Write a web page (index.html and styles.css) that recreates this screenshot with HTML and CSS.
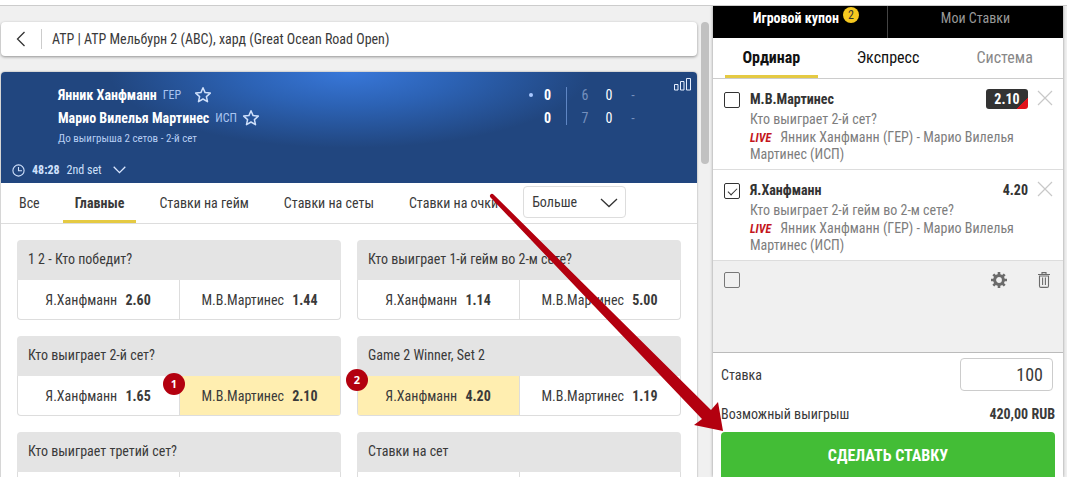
FILE: index.html
```html
<!DOCTYPE html>
<html lang="ru">
<head>
    <meta charset="UTF-8">
    <meta name="viewport" content="width=device-width, initial-scale=1.0">
    <title>Янник Ханфманн - Марио Вилелья Мартинес</title>
    <link rel="stylesheet" href="styles.css">
</head>
<body>
    <div class="topbar"></div>
    <div class="app">
        <main class="event">
            <div class="breadcrumb">
                <a href="#" class="back" aria-label="Назад">
                    <svg width="10" height="16" viewBox="0 0 10 16"><path d="M8.500 1 1.500 8l7 7" fill="none" stroke="#333" stroke-width="1.300"/></svg>
                </a>
                <span class="breadcrumb-title">ATP | ATP Мельбурн 2 (ABC), хард (Great Ocean Road Open)</span>
            </div>

            <div class="match-card">
                <header class="match">
                    <div class="teams">
                        <div class="team">
                            <b>Янник Ханфманн</b><span class="country">ГЕР</span>
                            <button class="star star-far" type="button" aria-label="В избранное"><svg width="18" height="18" viewBox="0 0 18 18"><path d="M9 1.800l2.100 4.800 5.200.5-3.900 3.500 1.100 5.100L9 13l-4.500 2.700 1.100-5.100-3.900-3.500 5.200-.5z" fill="none" stroke="#cfe0fb" stroke-width="1.500" stroke-linejoin="round"/></svg></button>
                        </div>
                        <div class="team">
                            <b>Марио Вилелья Мартинес</b><span class="country">ИСП</span>
                            <button class="star" type="button" aria-label="В избранное"><svg width="18" height="18" viewBox="0 0 18 18"><path d="M9 1.800l2.100 4.800 5.200.5-3.900 3.500 1.100 5.100L9 13l-4.500 2.700 1.100-5.100-3.900-3.500 5.200-.5z" fill="none" stroke="#cfe0fb" stroke-width="1.500" stroke-linejoin="round"/></svg></button>
                        </div>
                        <div class="match-note">До выигрыша 2 сетов - 2-й сет</div>
                    </div>
                    <div class="scores">
                        <div class="serve"></div>
                        <div class="score-col points"><b>0</b><b>0</b></div>
                        <div class="score-col set-past"><span>6</span><span>7</span></div>
                        <div class="score-col set-now"><span>0</span><span>0</span></div>
                        <div class="score-col set-past"><span>-</span><span>-</span></div>
                    </div>
                    <button class="stats" type="button" aria-label="Статистика"><svg width="18" height="13" viewBox="0 0 18 13"><path d="M.5 6.500h3.500v5.500H.5zM6.500 3.500H10V12H6.500zM12.500.5H16.500V12H12.500z" fill="none" stroke="#e6efff" stroke-width="1"/></svg></button>
                    <button class="clock" type="button">
                        <svg width="13" height="13" viewBox="0 0 13 13"><circle cx="6.500" cy="6.500" r="5.600" fill="none" stroke="#cfe0fb" stroke-width="1.100"/><path d="M6.500 3v3.700H10" fill="none" stroke="#cfe0fb" stroke-width="1.100"/></svg>
                        <b>48:28</b><span>2nd set</span>
                        <svg class="clock-arrow" width="13" height="8" viewBox="0 0 13 8"><path d="M.7.8l5.800 5.800L12.300.8" fill="none" stroke="#dbe8ff" stroke-width="1.300"/></svg>
                    </button>
                </header>

                <nav class="tabs">
                    <button class="tab" type="button">Все</button>
                    <button class="tab active" type="button">Главные</button>
                    <button class="tab" type="button">Ставки на гейм</button>
                    <button class="tab" type="button">Ставки на сеты</button>
                    <button class="tab" type="button">Ставки на очки</button>
                    <div class="more">
                        <select aria-label="Другие ставки"><option>Больше</option></select>
                        <svg class="more-arrow" width="18" height="10" viewBox="0 0 18 10"><path d="M1 1l8 7.500L17 1" fill="none" stroke="#333" stroke-width="1.300"/></svg>
                    </div>
                </nav>

                <div class="markets">
                    <section class="market">
                        <h3>1 2 - Кто победит?</h3>
                        <div class="odds">
                            <button type="button">Я.Ханфманн <b>2.60</b></button>
                            <button type="button">М.В.Мартинес <b>1.44</b></button>
                        </div>
                    </section>
                    <section class="market">
                        <h3>Кто выиграет 1-й гейм во 2-м сете?</h3>
                        <div class="odds">
                            <button type="button">Я.Ханфманн <b>1.14</b></button>
                            <button type="button">М.В.Мартинес <b>5.00</b></button>
                        </div>
                    </section>
                    <section class="market">
                        <h3>Кто выиграет 2-й сет?</h3>
                        <div class="odds">
                            <button type="button">Я.Ханфманн <b>1.65</b></button>
                            <button type="button" class="picked">М.В.Мартинес <b>2.10</b></button>
                            <span class="step step-1">1</span>
                        </div>
                    </section>
                    <section class="market">
                        <h3>Game 2 Winner, Set 2</h3>
                        <div class="odds">
                            <button type="button" class="picked">Я.Ханфманн <b>4.20</b></button>
                            <button type="button">М.В.Мартинес <b>1.19</b></button>
                            <span class="step step-2">2</span>
                        </div>
                    </section>
                    <section class="market">
                        <h3>Кто выиграет третий сет?</h3>
                        <div class="odds"><button type="button"></button><button type="button"></button></div>
                    </section>
                    <section class="market">
                        <h3>Ставки на сет</h3>
                        <div class="odds"><button type="button"></button><button type="button"></button></div>
                    </section>
                </div>
            </div>
        </main>
        <div class="scroll"><div class="scroll-thumb"></div></div>

        <aside class="coupon">
            <div class="coupon-head">
                <button type="button" class="current">Игровой купон<span class="count">2</span></button>
                <button type="button">Мои Ставки</button>
            </div>
            <div class="coupon-tabs">
                <button type="button" class="active">Ординар</button>
                <button type="button">Экспресс</button>
                <button type="button" class="disabled">Система</button>
            </div>

            <article class="bet">
                <input type="checkbox" id="bet1" class="check">
                <div class="bet-body">
                    <div class="bet-top">
                        <label for="bet1">М.В.Мартинес</label>
                        <span class="price changed">2.10</span>
                    </div>
                    <p>Кто выиграет 2-й сет?</p>
                    <p class="bet-match"><em>LIVE</em>Янник Ханфманн (ГЕР) - Марио Вилелья Мартинес (ИСП)</p>
                </div>
                <button type="button" class="remove" aria-label="Удалить"><svg width="16" height="16" viewBox="0 0 16 16"><path d="M1 1l14 14M15 1L1 15" stroke="#c8c8c8" stroke-width="1.200"/></svg></button>
            </article>
            <article class="bet">
                <input type="checkbox" id="bet2" class="check" checked>
                <div class="bet-body">
                    <div class="bet-top">
                        <label for="bet2">Я.Ханфманн</label>
                        <span class="price">4.20</span>
                    </div>
                    <p>Кто выиграет 2-й гейм во 2-м сете?</p>
                    <p class="bet-match"><em>LIVE</em>Янник Ханфманн (ГЕР) - Марио Вилелья Мартинес (ИСП)</p>
                </div>
                <button type="button" class="remove" aria-label="Удалить"><svg width="16" height="16" viewBox="0 0 16 16"><path d="M1 1l14 14M15 1L1 15" stroke="#c8c8c8" stroke-width="1.200"/></svg></button>
            </article>

            <div class="coupon-tools">
                <input type="checkbox" class="check check-all" aria-label="Выбрать все">
                <button type="button" class="tool" aria-label="Настройки"><svg width="16" height="16" viewBox="0 0 16 16"><circle cx="8" cy="8" r="4.400" fill="none" stroke="#6b6b6b" stroke-width="3"/><path d="M8 0v3M8 13v3M0 8h3M13 8h3M2.300 2.300l2.200 2.200M11.500 11.500l2.200 2.200M2.300 13.700l2.200-2.200M11.500 4.500l2.200-2.200" stroke="#6b6b6b" stroke-width="2.600"/></svg></button>
                <button type="button" class="tool" aria-label="Очистить"><svg width="12" height="16" viewBox="0 0 12 16"><path d="M0 2.500h12M4 2.500V.6h4v1.900M1.500 4v10q0 1.400 1.400 1.400h6.200q1.400 0 1.400-1.400V4zM4.600 5.500v7.500M7.400 5.500v7.500" fill="none" stroke="#6b6b6b" stroke-width="1.100"/></svg></button>
            </div>

            <form class="stake">
                <div class="stake-row">
                    <label for="stake">Ставка</label>
                    <input type="text" id="stake" value="100">
                </div>
                <div class="payout"><span>Возможный выигрыш</span><b>420,00 RUB</b></div>
                <button type="button" class="submit">СДЕЛАТЬ СТАВКУ</button>
            </form>
        </aside>

        <svg class="pointer" width="240" height="240" viewBox="0 0 240 240"><path d="M3.500 2.500Q5 1 7 3L224 218l7-8 5 29-29-6 8-6L4 6Q2 4 3.500 2.500z" fill="#b3000f"/></svg>
    </div>
</body>
</html>
```
FILE: styles.css
```css
* {
    box-sizing: border-box;
}
body {
    margin: 0;
    height: 100vh;
    display: flex;
    flex-direction: column;
    overflow: hidden;
    background: #f0f0f0;
    color: #3a3a3a;
    font-family: "Roboto Condensed", "Liberation Sans Narrow", Roboto, sans-serif;
    font-size: 14px;
    line-height: 16px;
}
button, input, select {
    font: inherit;
    color: inherit;
    margin: 0;
}
button {
    padding: 0;
    border: none;
    background: none;
    cursor: pointer;
}
svg {
    display: block;
}
h3, p {
    margin: 0;
}
.topbar {
    flex: none;
    height: 6px;
    background: #fff;
    border-bottom: 1px solid #ccc;
}
.app {
    position: relative;
    flex: 1;
    min-height: 0;
    display: flex;
    padding-right: 4px;
    overflow: hidden;
}

/* event column */
.event {
    flex: 1;
    min-width: 0;
    padding: 16px 2px 0 1px;
}
.breadcrumb {
    display: flex;
    align-items: center;
    height: 34px;
    margin-bottom: 16px;
    background: #fff;
    border-radius: 4px;
    box-shadow: 0 1px 3px rgba(0, 0, 0, 0.4);
}
.back {
    display: flex;
    align-items: center;
    width: 41px;
    height: 20px;
    padding-left: 15px;
    border-right: 1px solid #ccc;
}
.breadcrumb-title {
    padding-left: 10px;
}
.match-card {
    background: #fff;
    border-radius: 4px;
    box-shadow: 0 0 2px rgba(0, 0, 0, 0.4);
}
.match {
    position: relative;
    display: grid;
    grid-template-columns: 1fr auto;
    height: 111px;
    padding: 11px 52px 0 57px;
    border-radius: 4px 4px 0 0;
    background: radial-gradient(ellipse 240px 76px at 50% 0, #3877d9 0%, #2c62b4 45%, #21467f 100%);
    color: #fff;
}
.team {
    display: flex;
    align-items: center;
    height: 23px;
}
.team b {
    font-weight: 700;
}
.country {
    margin-left: 6px;
    color: #a9c4f0;
    font-size: 12px;
}
.star {
    margin-left: 5px;
}
.star-far {
    margin-left: 13px;
}
.match-note {
    color: #b7cef3;
    font-size: 11px;
    line-height: 20px;
}
.scores {
    display: flex;
    align-items: flex-start;
}
.serve {
    width: 4px;
    height: 4px;
    margin: 10px 4px 0 0;
    border-radius: 50%;
    background: #a9c8ff;
}
.score-col {
    display: grid;
    grid-template-rows: 23px 23px;
    align-items: center;
    width: 24px;
    text-align: center;
}
.points {
    width: 30px;
    height: 38px;
    margin: 4px 6px 0 0;
    padding-right: 8px;
    align-content: center;
    border-right: 1px solid #5f86c4;
}
.set-past {
    color: #7590bd;
}
.stats {
    position: absolute;
    top: 6px;
    right: 5px;
}
.clock {
    position: absolute;
    left: 11px;
    bottom: 5px;
    display: flex;
    align-items: center;
    gap: 7px;
    color: #cfe0fb;
    font-size: 12px;
}
.clock-arrow {
    margin-left: 4px;
}

/* market tabs */
.tabs {
    display: flex;
    height: 41px;
    border-bottom: 1px solid #ddd;
}
.tab {
    height: 40px;
    padding: 2px 12px 0;
    margin-right: 11px;
    border-bottom: 3px solid transparent;
}
.tab:first-child {
    padding-left: 18px;
}
.tab.active {
    border-color: #e5ca43;
    font-weight: 700;
}
.more {
    position: relative;
    width: 103px;
    height: 32px;
    margin: 3px 0 0 2px;
}
.more select {
    appearance: none;
    width: 100%;
    height: 100%;
    padding: 0 8px;
    border: 1px solid #ddd;
    border-radius: 4px;
    background: #fff;
}
.more-arrow {
    position: absolute;
    top: 12px;
    right: 8px;
    pointer-events: none;
}

/* markets */
.markets {
    display: grid;
    grid-template-columns: 1fr 1fr;
    gap: 16px;
    padding: 16px;
}
.market {
    height: 80px;
}
.market h3 {
    height: 40px;
    padding-left: 11px;
    border-radius: 4px 4px 0 0;
    background: #e4e4e4;
    font-size: 14px;
    font-weight: 400;
    line-height: 38px;
}
.odds {
    position: relative;
    display: grid;
    grid-template-columns: 1fr 1fr;
    height: 40px;
    border: 1px solid #ddd;
    border-top: none;
    border-radius: 0 0 4px 4px;
}
.odds button {
    padding-right: 1px;
}
.odds button + button {
    border-left: 1px solid #ddd;
}
.odds b {
    margin-left: 5px;
}
.odds .picked {
    background: #ffeeb0;
}
.step {
    position: absolute;
    width: 22px;
    height: 22px;
    border-radius: 50%;
    background: #b3000f;
    color: #fff;
    font: bold 11px/22px "Open Sans", sans-serif;
    text-align: center;
}
.step-1 {
    top: -3px;
    left: 145px;
}
.step-2 {
    top: -7px;
    left: -12px;
}
.scroll {
    flex: none;
    width: 14px;
    padding: 16px 4px 0 2px;
}
.scroll-thumb {
    height: 142px;
    border-radius: 4px;
    background: #c1c1c1;
}

/* coupon */
.coupon {
    flex: none;
    width: 350px;
    background: #fff;
    box-shadow: 0 0 3px rgba(0, 0, 0, 0.4);
}
.coupon-head {
    display: flex;
    height: 32px;
    background: #000;
}
.coupon-head button {
    width: 50%;
    display: flex;
    justify-content: center;
    padding-top: 4px;
    color: #999;
}
.coupon-head .current {
    padding-left: 12px;
    border-right: 1px solid #444;
    color: #fff;
    font-weight: 700;
}
.count {
    width: 16px;
    height: 16px;
    margin: -3px 0 0 4px;
    border-radius: 50%;
    background: #f5c81f;
    color: #333;
    font-size: 12px;
    font-weight: 400;
}
.coupon-tabs {
    display: grid;
    grid-template-columns: 1fr 1fr 1fr;
    height: 41px;
    border-bottom: 1px solid #ccc;
    color: #111;
    font-size: 16px;
}
.coupon-tabs button {
    margin: 0 12px;
    padding-top: 2px;
    border-bottom: 3px solid transparent;
}
.coupon-tabs .active {
    border-color: #e5ca43;
    font-weight: 700;
}
.coupon-tabs .disabled {
    color: #888;
}
.bet {
    display: flex;
    align-items: flex-start;
    padding: 10px 10px 7px 11px;
    border-bottom: 1px solid #ddd;
}
.check {
    appearance: none;
    flex: none;
    width: 16px;
    height: 16px;
    margin-top: 3px;
    border: 1px solid #333;
    border-radius: 2px;
    background: #fff;
}
.check:checked::after {
    content: "";
    display: block;
    width: 8px;
    height: 4px;
    margin: 4px 0 0 3px;
    border-left: 1px solid #333;
    border-bottom: 1px solid #333;
    transform: rotate(-45deg);
}
.bet-body {
    flex: 1;
    padding-left: 10px;
    color: #7d7d7d;
}
.bet-top {
    display: flex;
    justify-content: space-between;
    align-items: center;
    height: 20px;
    margin-bottom: 2px;
    color: #333;
    font-weight: 700;
}
.price.changed {
    width: 42px;
    border-radius: 3px;
    background: linear-gradient(135deg, #333 82%, #e0121b 82%);
    color: #fff;
    line-height: 20px;
    text-align: center;
}
.bet-match {
    margin-top: 2px;
}
.bet-match em {
    margin-right: 9px;
    color: #c4161c;
    font-size: 12px;
    font-weight: 700;
}
.remove {
    margin: 1px 0 0 9px;
}
.coupon-tools {
    display: flex;
    align-items: flex-start;
    gap: 31px;
    height: 92px;
    padding: 11px 13px 0 11px;
    border-bottom: 1px solid #bbb;
    background: #f0f0f0;
}
.check-all {
    margin: 0 auto 0 0;
    border-color: #777;
    background: transparent;
}
.stake {
    padding: 5px 8px 0;
}
.stake-row, .payout {
    display: flex;
    justify-content: space-between;
    align-items: center;
}
.stake-row input {
    width: 93px;
    height: 33px;
    margin-right: 2px;
    padding: 0 9px;
    border: 1px solid #ccc;
    border-radius: 4px;
    background: #fff;
    font-size: 18px;
    text-align: right;
}
.payout {
    height: 41px;
    padding-top: 4px;
}
.submit {
    width: 100%;
    height: 48px;
    border-radius: 4px;
    background: #43bd36;
    color: #fff;
    font-size: 16px;
    font-weight: 700;
}

/* arrow drawn over the page */
.pointer {
    position: absolute;
    top: 186px;
    right: 340px;
    pointer-events: none;
}
```
